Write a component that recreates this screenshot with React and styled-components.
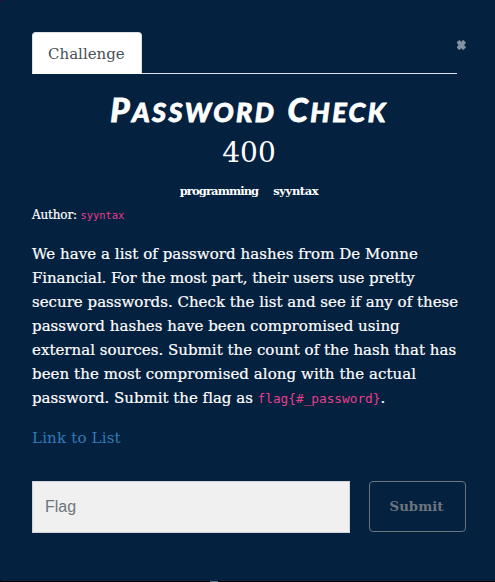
import React from "react";
import styled, { createGlobalStyle } from "styled-components";

const slab = `"DejaVu Serif", serif`;
const mono = `"DejaVu Sans Mono", monospace`;

const GlobalStyle = createGlobalStyle`
  * { box-sizing: border-box; }
  body {
    margin: 0;
    overflow: hidden;
    background: linear-gradient(#4a0a30 0 4px, #000 4px);
  }
  p, h2, h3 { margin: 0; font-weight: 400; }
`;

const Modal = styled.main`
  width: 495px;
  height: 581px;
  padding: 32px 29px 0 32px;
  border-radius: 4px 0 0 2px;
  background: #04213f;
  color: #fff;
  font-family: ${slab};
`;

const Backdrop = styled.div`
  width: 8px;
  height: 1px;
  margin-left: 210px;
  background: #66717e;
`;

const Header = styled.header`
  display: flex;
  height: 42px;
`;

const TabBar = styled.nav`
  display: flex;
  width: 425px;
  border-bottom: 1px solid #dee2e6;
`;

const Tab = styled.div`
  width: 110px;
  height: 42px;
  padding-left: 15px;
  border: 1px solid #dee2e6;
  border-bottom-color: #fff;
  border-radius: 4px 4px 0 0;
  background: #fff;
  color: #495057;
  font-size: 15px;
  line-height: 42px;
`;

const CloseButton = styled.button`
  display: block;
  width: 9px;
  height: 10px;
  margin-top: 8px;
  padding: 0;
  border: 0;
  background: none;
  color: #8290a0;
  svg { display: block; }
`;

const Title = styled.h2`
  height: 52px;
  padding-top: 12px;
  text-align: center;
  white-space: nowrap;
  font: italic 900 27px/46px Lato, sans-serif;
  letter-spacing: 2.4px;
  word-spacing: 3px;
  text-transform: uppercase;
  -webkit-text-stroke: 0.8px #fff;
`;

const Initial = styled.span`
  font-size: 33px;
`;

const Score = styled.h3`
  height: 46px;
  padding-top: 9px;
  text-align: center;
  font-size: 28px;
  line-height: 36px;
`;

const Tags = styled.div`
  display: flex;
  justify-content: center;
  gap: 15px;
  height: 34px;
  padding-top: 10px;
  font-size: 11.5px;
  font-weight: 700;
  line-height: 18px;
`;

const Tag = styled.span`
  letter-spacing: ${(p) => p.$spacing}px;
`;

const Author = styled.p`
  height: 36px;
  font-size: 12px;
  line-height: 18px;
  letter-spacing: -0.15px;
  -webkit-text-stroke: 0.2px;
`;

const Code = styled.code`
  color: #e83e8c;
  font-family: ${mono};
  font-size: ${(p) => p.$size}px;
  letter-spacing: 0;
  -webkit-text-stroke: 0;
`;

const Description = styled.p`
  font-size: 15px;
  line-height: 24px;
  -webkit-text-stroke: 0.2px;
`;

const Line = styled.span`
  display: block;
  white-space: nowrap;
  letter-spacing: ${(p) => p.$spacing}px;
`;

const FileLink = styled.a`
  display: block;
  margin-top: 15px;
  color: #337ab7;
  font-size: 15px;
  line-height: 24px;
  letter-spacing: 0.18px;
`;

const Form = styled.form`
  display: flex;
  gap: 19px;
  margin-top: 31px;
`;

const FlagInput = styled.input`
  width: 318px;
  height: 52px;
  padding: 0 12px;
  border: 1px solid #ced4da;
  border-radius: 0;
  background: #f0f0f0;
  font: 16px "Liberation Sans", sans-serif;
  &::placeholder { color: #6c757d; opacity: 1; }
`;

const SubmitButton = styled.button`
  width: 97px;
  height: 51px;
  padding: 0 2px 0 0;
  border: 1px solid #6c757d;
  border-radius: 4px;
  background: none;
  color: #6c757d;
  font: 700 13.3px ${slab};
`;

const lines = [
  ["We have a list of password hashes from De Monne", 0.055],
  ["Financial. For the most part, their users use pretty", -0.09],
  ["secure passwords. Check the list and see if any of these", 0.01],
  ["password hashes have been compromised using", 0.04],
  ["external sources. Submit the count of the hash that has", 0.02],
  ["been the most compromised along with the actual", 0.06],
];

export default function App() {
  return (
    <>
      <GlobalStyle />
      <Modal>
        <Header>
          <TabBar><Tab>Challenge</Tab></TabBar>
          <CloseButton aria-label="Close">
            <svg width="9" height="10" viewBox="0 0 9 10">
              <path d="M2.3 2.8 L6.2 7.2 M6.2 2.8 L2.3 7.2" stroke="currentColor" strokeWidth="4.2" strokeLinecap="square" />
            </svg>
          </CloseButton>
        </Header>
        <Title><Initial>P</Initial>assword <Initial>C</Initial>heck</Title>
        <Score>400</Score>
        <Tags><Tag $spacing={-0.9}>programming</Tag><Tag $spacing={-0.4}>syyntax</Tag></Tags>
        <Author>Author: <Code $size={10.4}>syyntax</Code></Author>
        <Description>
          {lines.map(([text, spacing]) => <Line key={text} $spacing={spacing}>{text}</Line>)}
          <Line $spacing={-0.01}>password. Submit the flag as <Code $size={12.75}>{"flag{#_password}"}</Code>.</Line>
        </Description>
        <FileLink>Link to List</FileLink>
        <Form>
          <FlagInput placeholder="Flag" />
          <SubmitButton type="button">Submit</SubmitButton>
        </Form>
      </Modal>
      <Backdrop />
    </>
  );
}
